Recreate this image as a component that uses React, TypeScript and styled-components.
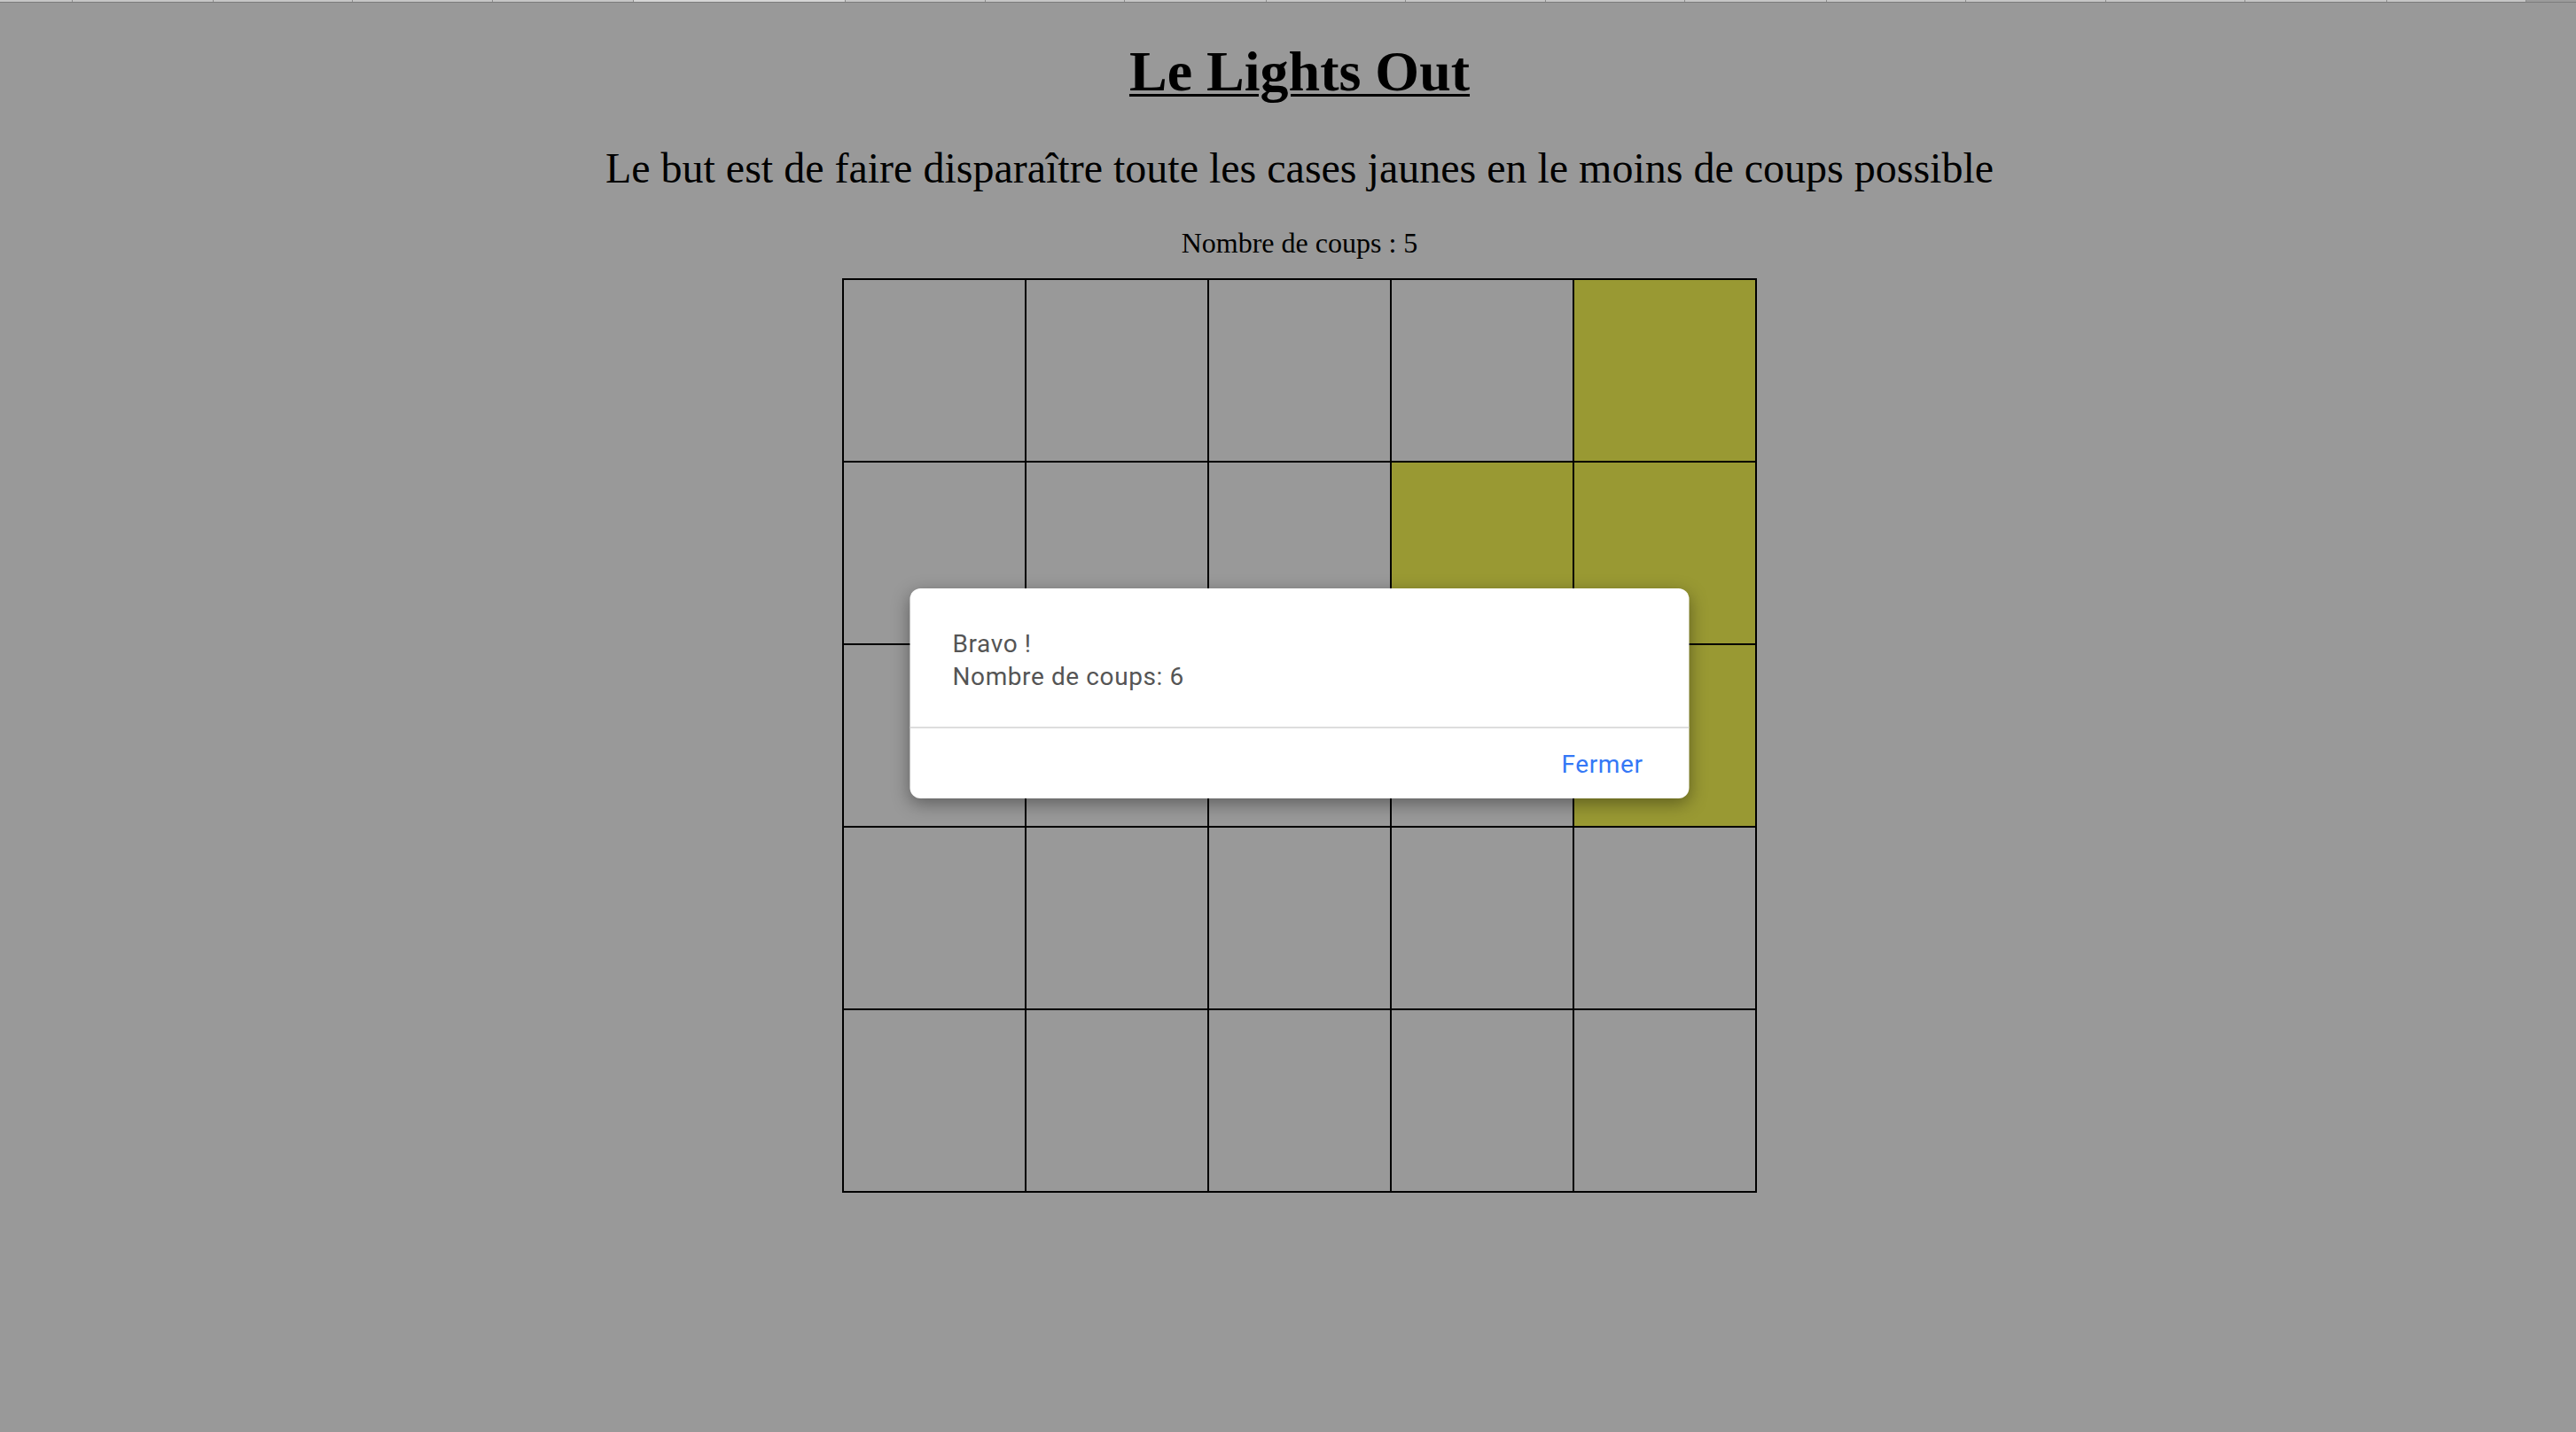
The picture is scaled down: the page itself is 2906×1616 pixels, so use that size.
import React from "react";
import styled, { createGlobalStyle } from "styled-components";

const GlobalStyle = createGlobalStyle`
  html, body {
    margin: 0;
    padding: 0;
    background: #999999;
  }
  * { box-sizing: border-box; }
`;

const Strip = styled.div`
  display: flex;
  height: 3px;
  background: #9b9b9b;
  border-bottom: 1px solid #7c7c7c;
`;

const Tab = styled.div<{ $w: number; $active?: boolean }>`
  flex: 0 0 ${(p) => p.$w}px;
  height: 2px;
  background: ${(p) => (p.$active ? "#d6d6d6" : "#c6c6c6")};
  border-right: 1px solid #8d8d8d;
`;

const Page = styled.div`
  position: relative;
  padding-left: 26px;
  min-height: 1613px;
`;

const Main = styled.main`
  display: flex;
  flex-direction: column;
  align-items: center;
  padding-top: 41px;
  font-family: "Liberation Serif", "Times New Roman", serif;
  color: #000;
`;

const Title = styled.h1`
  margin: 0;
  font-size: 64px;
  line-height: 74px;
  font-weight: 700;
  text-decoration: underline;
  text-decoration-thickness: 3px;
  text-underline-offset: 4px;
`;

const Subtitle = styled.p`
  margin: 44px 0 0;
  font-size: 48px;
  line-height: 56px;
  font-weight: 400;
`;

const Counter = styled.p`
  margin: 38px 0 0;
  font-size: 32px;
  line-height: 37px;
`;

const Board = styled.div`
  margin-top: 21px;
  display: grid;
  grid-template-columns: repeat(5, 206px);
  grid-auto-rows: 206px;
  border-left: 2px solid #000;
  border-top: 2px solid #000;
`;

const Cell = styled.div<{ $on: boolean }>`
  background: ${(p) => (p.$on ? "#999933" : "#999999")};
  border-right: 2px solid #000;
  border-bottom: 2px solid #000;
`;

const Dialog = styled.div`
  position: absolute;
  top: 661px;
  left: calc(26px + (100% - 26px) / 2);
  transform: translateX(-50%);
  width: 879px;
  background: #ffffff;
  border-radius: 12px;
  box-shadow: 0 6px 20px rgba(0, 0, 0, 0.38);
  font-family: Roboto, "Helvetica Neue", Arial, sans-serif;
  overflow: hidden;
`;

const DialogBody = styled.div`
  padding: 44px 48px 38px;
  color: #555555;
  font-size: 28px;
  line-height: 37px;
  letter-spacing: 0.6px;
  border-bottom: 2px solid #dddddd;
`;

const Line = styled.div``;

const DialogFooter = styled.div`
  display: flex;
  justify-content: flex-end;
  padding: 22px 52px 20px;
`;

const CloseButton = styled.button`
  border: none;
  background: none;
  padding: 0;
  margin: 0;
  font-family: inherit;
  font-size: 28px;
  line-height: 37px;
  letter-spacing: 0.6px;
  color: #3478f6;
  cursor: pointer;
`;

const lights = [
  [0, 0, 0, 0, 1],
  [0, 0, 0, 1, 1],
  [0, 0, 0, 0, 1],
  [0, 0, 0, 0, 0],
  [0, 0, 0, 0, 0],
];

const tabs = [82, 159, 157, 158, 159, 239, 158, 157, 160, 157, 158, 157, 160, 157, 158, 157, 160, 157];

export default function App() {
  return (
    <>
      <GlobalStyle />
      <Strip>
        {tabs.map((w, i) => (
          <Tab key={i} $w={w} $active={i === 5} />
        ))}
      </Strip>
      <Page>
        <Main>
          <Title>Le Lights Out</Title>
          <Subtitle>
            Le but est de faire disparaître toute les cases jaunes en le moins de coups possible
          </Subtitle>
          <Counter>Nombre de coups : 5</Counter>
          <Board>
            {lights.map((row, r) =>
              row.map((v, c) => <Cell key={`${r}-${c}`} $on={v === 1} />)
            )}
          </Board>
        </Main>
        <Dialog role="dialog">
          <DialogBody>
            <Line>Bravo !</Line>
            <Line>Nombre de coups: 6</Line>
          </DialogBody>
          <DialogFooter>
            <CloseButton>Fermer</CloseButton>
          </DialogFooter>
        </Dialog>
      </Page>
    </>
  );
}
